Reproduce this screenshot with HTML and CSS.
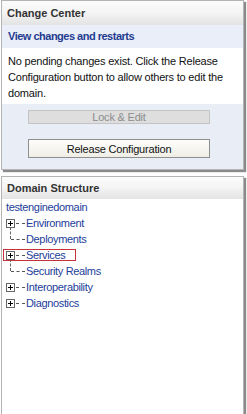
FILE: index.html
```
<!DOCTYPE html>
<html lang="en">
<head>
    <meta charset="UTF-8">
    <title>Change Center</title>
    <link rel="stylesheet" href="styles.css">
</head>
<body>
    <div class="panel change-center">
        <div class="panel-head">Change Center</div>
        <div class="sub-head">View changes and restarts</div>
        <div class="message">No pending changes exist. Click the Release Configuration button to allow others to edit the domain.</div>
        <div class="actions">
            <button class="btn" disabled>Lock &amp; Edit</button>
            <button class="btn">Release Configuration</button>
        </div>
    </div>

    <div class="panel domain">
        <div class="panel-head">Domain Structure</div>
        <div class="tree">
            <div class="root">testenginedomain</div>
            <ul class="nodes">
                <li class="node"><span class="toggle"></span><span class="dash"></span><span class="label">Environment</span></li>
                <li class="node leaf"><span class="dash"></span><span class="label">Deployments</span></li>
                <li class="node selected"><span class="toggle"></span><span class="dash"></span><span class="label">Services</span></li>
                <li class="node leaf"><span class="dash"></span><span class="label">Security Realms</span></li>
                <li class="node"><span class="toggle"></span><span class="dash"></span><span class="label">Interoperability</span></li>
                <li class="node"><span class="toggle"></span><span class="dash"></span><span class="label">Diagnostics</span></li>
            </ul>
        </div>
    </div>
</body>
</html>
```

FILE: styles.css
```
html, body {
    height: 100%;
    overflow: hidden;
}

body {
    margin: 0;
    padding: 0 3px 0 1px;
    background: #fff;
    font-family: "Liberation Sans", Arial, sans-serif;
    font-size: 11px;
    color: #222;
}

.panel {
    border: 1px solid #b4b4b4;
    box-shadow: 2px 2px 1px #8a8a8a;
    background: #fff;
}

.domain {
    margin-top: 6px;
    height: 250px;
}

.panel-head {
    height: 24px;
    line-height: 25px;
    padding-left: 5px;
    font-weight: bold;
    color: #333;
    background: linear-gradient(#fbfbfb, #f5f5f5 45%, #e3e3e3);
}

.domain .panel-head {
    height: 22px;
    line-height: 22px;
}

.sub-head {
    height: 23px;
    line-height: 23px;
    padding-left: 6px;
    font-weight: bold;
    letter-spacing: -0.5px;
    color: #1f3c8f;
    background: #e9eef9;
}

.message {
    padding: 5px 6px 3px;
    line-height: 16px;
    letter-spacing: -0.2px;
    color: #111;
}

.actions {
    background: #e9edf5;
    padding: 6px 33px 11px 26px;
    display: flex;
    flex-direction: column;
    gap: 15px;
}

.btn {
    height: 19px;
    font-family: inherit;
    font-size: 11px;
    letter-spacing: -0.2px;
    color: #111;
    border: 1px solid #8f8f8f;
    background: linear-gradient(#fdfdfb, #efeee6);
    padding: 0;
}

.btn:disabled {
    height: 14px;
    line-height: 12px;
    color: #8c8c8c;
    border-color: #c4c4c4;
    background: #dedede;
}

.tree {
    padding: 0 4px;
    letter-spacing: -0.35px;
}

.root {
    line-height: 16px;
    color: #22409a;
}

.nodes {
    list-style: none;
    margin: 0;
    padding: 0;
}

.node {
    position: relative;
    display: flex;
    align-items: center;
    height: 16px;
    color: #22409a;
}

.leaf::before {
    content: "";
    position: absolute;
    left: 4px;
    top: -4px;
    height: 12px;
    border-left: 1px dashed #666;
}

.toggle {
    position: relative;
    width: 7px;
    height: 7px;
    border: 1px solid #666;
    background: #fff;
}

.toggle::before {
    content: "";
    position: absolute;
    left: 1px;
    top: 3px;
    width: 5px;
    height: 1px;
    background: #000;
}

.toggle::after {
    content: "";
    position: absolute;
    left: 3px;
    top: 1px;
    width: 1px;
    height: 5px;
    background: #000;
}

.dash {
    width: 9px;
    margin-left: 1px;
    border-top: 1px dashed #555;
}

.leaf .dash {
    margin-left: 5px;
    width: 14px;
}

.label {
    margin-left: 1px;
}

.selected::after {
    content: "";
    position: absolute;
    left: -3px;
    top: 2px;
    width: 71px;
    height: 10px;
    border: 1px solid #c8303a;
}
```
